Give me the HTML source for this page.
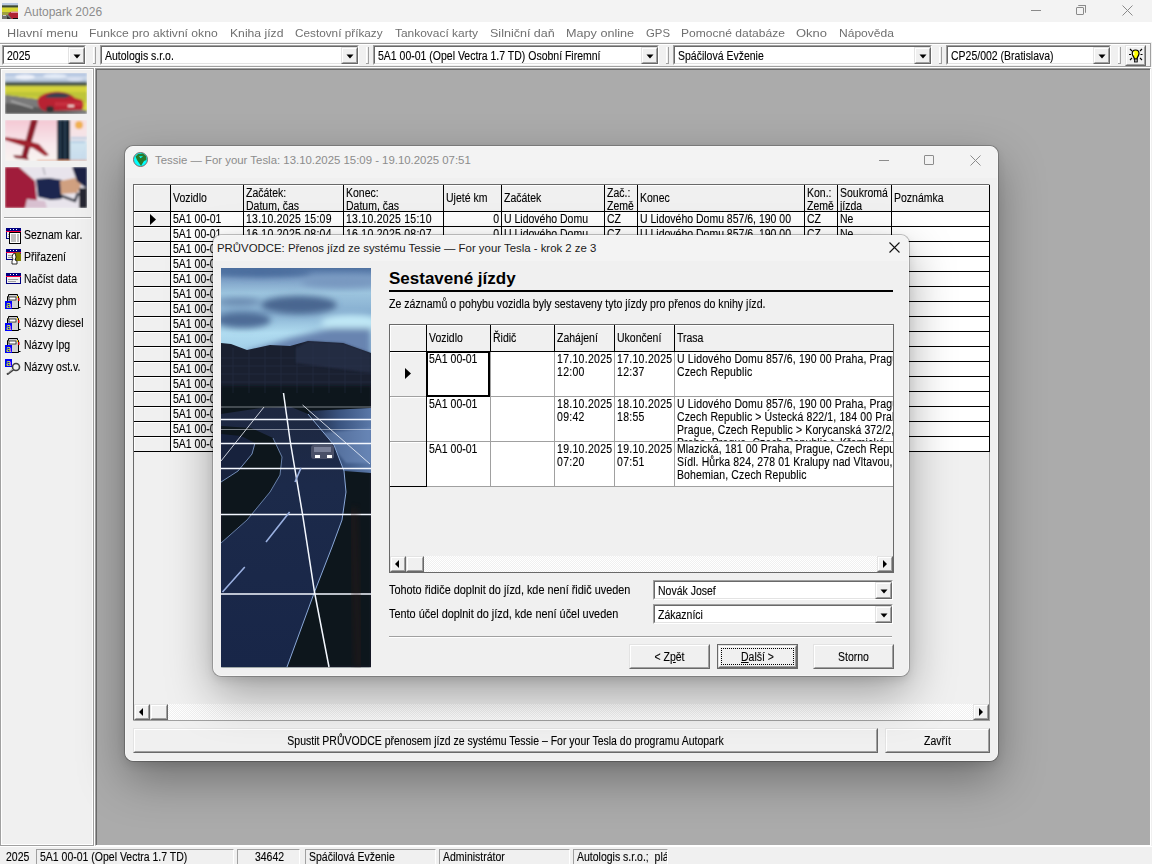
<!DOCTYPE html><html><head><meta charset="utf-8"><style>
*{margin:0;padding:0}
html,body{width:1152px;height:864px;overflow:hidden;background:#f0f0f0;font-family:"Liberation Sans", sans-serif;}
.t{position:absolute;white-space:pre;color:#000;font-size:12.3px;line-height:13px;transform:scaleX(.853);transform-origin:0 0;-webkit-text-stroke:0.12px #000;margin-top:1px;}
.s{position:absolute;white-space:pre;color:#000;}
.c{transform-origin:50% 0;}
.r{transform-origin:100% 0;}
</style></head><body><div style="position:absolute;left:0px;top:0px;width:1152px;height:22px;background:#f3f3f3;"></div><svg style="position:absolute;left:2px;top:3px" width="16" height="16" viewBox="0 0 16 16"><defs><filter id="ib"><feGaussianBlur stdDeviation="0.4"/></filter></defs><g filter="url(#ib)"><rect width="16" height="16" fill="#707070"/><rect width="16" height="2.5" fill="#b8c8e0"/><rect y="2.5" width="16" height="2" fill="#3a4a30"/><rect y="4.5" width="16" height="4.5" fill="#d8d830"/><path d="M0 9H8L6 12H0Z" fill="#a0a040"/><path d="M6 11L9 9H16V16H10Z" fill="#b02030"/><rect x="9" y="8.5" width="7" height="1.5" fill="#e090a0"/><path d="M5 13L9 16H5Z" fill="#303030"/><rect x="11" y="15" width="5" height="1" fill="#101010"/><rect x="1" y="12" width="3" height="1" fill="#c8c8c8"/></g></svg><div class="s" style="left:24px;top:4px;font-size:12px;line-height:16px;color:#8c8c8c;">Autopark 2026</div><div style="position:absolute;left:1031px;top:10px;width:10px;height:1px;background:#8a8a8a;"></div><div style="position:absolute;left:1076px;top:7px;width:8px;height:8px;box-sizing:border-box;border:1px solid #8a8a8a;border-radius:1px;"></div><div style="position:absolute;left:1078px;top:5px;width:8px;height:8px;box-sizing:border-box;border-top:1px solid #8a8a8a;border-right:1px solid #8a8a8a;border-radius:1px;"></div><svg style="position:absolute;left:1122px;top:5px" width="11" height="11"><path d="M0.5 0.5L10.5 10.5M10.5 0.5L0.5 10.5" stroke="#8a8a8a" stroke-width="1"/></svg><div style="position:absolute;left:0px;top:22px;width:1152px;height:20px;background:#fff;"></div><div class="s" style="left:7px;top:25px;font-size:11.6px;line-height:15px;color:#707070;transform:scaleX(1.09);transform-origin:0 0;">Hlavní menu</div><div class="s" style="left:89px;top:25px;font-size:11.6px;line-height:15px;color:#707070;transform:scaleX(1.045);transform-origin:0 0;">Funkce pro aktivní okno</div><div class="s" style="left:230px;top:25px;font-size:11.6px;line-height:15px;color:#707070;transform:scaleX(1.05);transform-origin:0 0;">Kniha jízd</div><div class="s" style="left:295px;top:25px;font-size:11.6px;line-height:15px;color:#707070;transform:scaleX(1.015);transform-origin:0 0;">Cestovní příkazy</div><div class="s" style="left:395px;top:25px;font-size:11.6px;line-height:15px;color:#707070;transform:scaleX(1.03);transform-origin:0 0;">Tankovací karty</div><div class="s" style="left:490px;top:25px;font-size:11.6px;line-height:15px;color:#707070;transform:scaleX(1.08);transform-origin:0 0;">Silniční daň</div><div class="s" style="left:566px;top:25px;font-size:11.6px;line-height:15px;color:#707070;transform:scaleX(1.09);transform-origin:0 0;">Mapy online</div><div class="s" style="left:646px;top:25px;font-size:11.6px;line-height:15px;color:#707070;transform:scaleX(0.98);transform-origin:0 0;">GPS</div><div class="s" style="left:681px;top:25px;font-size:11.6px;line-height:15px;color:#707070;transform:scaleX(1.04);transform-origin:0 0;">Pomocné databáze</div><div class="s" style="left:796px;top:25px;font-size:11.6px;line-height:15px;color:#707070;transform:scaleX(1.12);transform-origin:0 0;">Okno</div><div class="s" style="left:839px;top:25px;font-size:11.6px;line-height:15px;color:#707070;transform:scaleX(1.04);transform-origin:0 0;">Nápověda</div><div style="position:absolute;left:0px;top:42px;width:1152px;height:26px;background:#f0f0f0;"></div><div style="position:absolute;left:0px;top:43px;width:1151px;height:1px;background:#a0a0a0;"></div><div style="position:absolute;left:0px;top:44px;width:1151px;height:1px;background:#fff;"></div><div style="position:absolute;left:0px;top:66px;width:1151px;height:1px;background:#a0a0a0;"></div><div style="position:absolute;left:0px;top:67px;width:1152px;height:1px;background:#fff;"></div><div style="position:absolute;left:1150px;top:43px;width:1px;height:24px;background:#a0a0a0;"></div><div style="position:absolute;left:2px;top:45px;width:84px;height:20px;box-sizing:border-box;background:#fff;border-top:1px solid #a0a0a0;border-left:1px solid #a0a0a0;border-right:1px solid #fff;border-bottom:1px solid #fff;"><div style="position:absolute;left:0px;top:0px;width:82px;height:18px;box-sizing:border-box;border-top:1px solid #696969;border-left:1px solid #696969;border-right:1px solid #e3e3e3;border-bottom:1px solid #e3e3e3;"></div></div><div style="position:absolute;left:68px;top:47px;width:17px;height:17px;box-sizing:border-box;background:#f0f0f0;border-top:1px solid #e3e3e3;border-left:1px solid #e3e3e3;border-right:1px solid #696969;border-bottom:1px solid #696969;"><div style="position:absolute;left:0px;top:0px;width:15px;height:15px;box-sizing:border-box;border-top:1px solid #fff;border-left:1px solid #fff;border-right:1px solid #a0a0a0;border-bottom:1px solid #a0a0a0;"></div><svg style="position:absolute;left:4px;top:6px" width="8" height="5"><path d="M0.5 0.5H7.5L4 4.5Z" fill="#000"/></svg></div><div class="t" style="left:7px;top:48px;line-height:14px;">2025</div><div style="position:absolute;left:100px;top:45px;width:259px;height:20px;box-sizing:border-box;background:#fff;border-top:1px solid #a0a0a0;border-left:1px solid #a0a0a0;border-right:1px solid #fff;border-bottom:1px solid #fff;"><div style="position:absolute;left:0px;top:0px;width:257px;height:18px;box-sizing:border-box;border-top:1px solid #696969;border-left:1px solid #696969;border-right:1px solid #e3e3e3;border-bottom:1px solid #e3e3e3;"></div></div><div style="position:absolute;left:341px;top:47px;width:17px;height:17px;box-sizing:border-box;background:#f0f0f0;border-top:1px solid #e3e3e3;border-left:1px solid #e3e3e3;border-right:1px solid #696969;border-bottom:1px solid #696969;"><div style="position:absolute;left:0px;top:0px;width:15px;height:15px;box-sizing:border-box;border-top:1px solid #fff;border-left:1px solid #fff;border-right:1px solid #a0a0a0;border-bottom:1px solid #a0a0a0;"></div><svg style="position:absolute;left:4px;top:6px" width="8" height="5"><path d="M0.5 0.5H7.5L4 4.5Z" fill="#000"/></svg></div><div class="t" style="left:105px;top:48px;line-height:14px;">Autologis s.r.o.</div><div style="position:absolute;left:373px;top:45px;width:286px;height:20px;box-sizing:border-box;background:#fff;border-top:1px solid #a0a0a0;border-left:1px solid #a0a0a0;border-right:1px solid #fff;border-bottom:1px solid #fff;"><div style="position:absolute;left:0px;top:0px;width:284px;height:18px;box-sizing:border-box;border-top:1px solid #696969;border-left:1px solid #696969;border-right:1px solid #e3e3e3;border-bottom:1px solid #e3e3e3;"></div></div><div style="position:absolute;left:641px;top:47px;width:17px;height:17px;box-sizing:border-box;background:#f0f0f0;border-top:1px solid #e3e3e3;border-left:1px solid #e3e3e3;border-right:1px solid #696969;border-bottom:1px solid #696969;"><div style="position:absolute;left:0px;top:0px;width:15px;height:15px;box-sizing:border-box;border-top:1px solid #fff;border-left:1px solid #fff;border-right:1px solid #a0a0a0;border-bottom:1px solid #a0a0a0;"></div><svg style="position:absolute;left:4px;top:6px" width="8" height="5"><path d="M0.5 0.5H7.5L4 4.5Z" fill="#000"/></svg></div><div class="t" style="left:378px;top:48px;line-height:14px;">5A1 00-01 (Opel Vectra 1.7 TD) Osobní Firemní</div><div style="position:absolute;left:673px;top:45px;width:259px;height:20px;box-sizing:border-box;background:#fff;border-top:1px solid #a0a0a0;border-left:1px solid #a0a0a0;border-right:1px solid #fff;border-bottom:1px solid #fff;"><div style="position:absolute;left:0px;top:0px;width:257px;height:18px;box-sizing:border-box;border-top:1px solid #696969;border-left:1px solid #696969;border-right:1px solid #e3e3e3;border-bottom:1px solid #e3e3e3;"></div></div><div style="position:absolute;left:914px;top:47px;width:17px;height:17px;box-sizing:border-box;background:#f0f0f0;border-top:1px solid #e3e3e3;border-left:1px solid #e3e3e3;border-right:1px solid #696969;border-bottom:1px solid #696969;"><div style="position:absolute;left:0px;top:0px;width:15px;height:15px;box-sizing:border-box;border-top:1px solid #fff;border-left:1px solid #fff;border-right:1px solid #a0a0a0;border-bottom:1px solid #a0a0a0;"></div><svg style="position:absolute;left:4px;top:6px" width="8" height="5"><path d="M0.5 0.5H7.5L4 4.5Z" fill="#000"/></svg></div><div class="t" style="left:678px;top:48px;line-height:14px;">Spáčilová Evženie</div><div style="position:absolute;left:946px;top:45px;width:165px;height:20px;box-sizing:border-box;background:#fff;border-top:1px solid #a0a0a0;border-left:1px solid #a0a0a0;border-right:1px solid #fff;border-bottom:1px solid #fff;"><div style="position:absolute;left:0px;top:0px;width:163px;height:18px;box-sizing:border-box;border-top:1px solid #696969;border-left:1px solid #696969;border-right:1px solid #e3e3e3;border-bottom:1px solid #e3e3e3;"></div></div><div style="position:absolute;left:1093px;top:47px;width:17px;height:17px;box-sizing:border-box;background:#f0f0f0;border-top:1px solid #e3e3e3;border-left:1px solid #e3e3e3;border-right:1px solid #696969;border-bottom:1px solid #696969;"><div style="position:absolute;left:0px;top:0px;width:15px;height:15px;box-sizing:border-box;border-top:1px solid #fff;border-left:1px solid #fff;border-right:1px solid #a0a0a0;border-bottom:1px solid #a0a0a0;"></div><svg style="position:absolute;left:4px;top:6px" width="8" height="5"><path d="M0.5 0.5H7.5L4 4.5Z" fill="#000"/></svg></div><div class="t" style="left:951px;top:48px;line-height:14px;">CP25/002 (Bratislava)</div><div style="position:absolute;left:93px;top:47px;width:1px;height:16px;background:#fff;"></div><div style="position:absolute;left:95px;top:47px;width:1px;height:16px;background:#a0a0a0;"></div><div style="position:absolute;left:93px;top:63px;width:3px;height:1px;background:#a0a0a0;"></div><div style="position:absolute;left:366px;top:47px;width:1px;height:16px;background:#fff;"></div><div style="position:absolute;left:368px;top:47px;width:1px;height:16px;background:#a0a0a0;"></div><div style="position:absolute;left:366px;top:63px;width:3px;height:1px;background:#a0a0a0;"></div><div style="position:absolute;left:666px;top:47px;width:1px;height:16px;background:#fff;"></div><div style="position:absolute;left:668px;top:47px;width:1px;height:16px;background:#a0a0a0;"></div><div style="position:absolute;left:666px;top:63px;width:3px;height:1px;background:#a0a0a0;"></div><div style="position:absolute;left:939px;top:47px;width:1px;height:16px;background:#fff;"></div><div style="position:absolute;left:941px;top:47px;width:1px;height:16px;background:#a0a0a0;"></div><div style="position:absolute;left:939px;top:63px;width:3px;height:1px;background:#a0a0a0;"></div><div style="position:absolute;left:1118px;top:47px;width:1px;height:16px;background:#fff;"></div><div style="position:absolute;left:1120px;top:47px;width:1px;height:16px;background:#a0a0a0;"></div><div style="position:absolute;left:1118px;top:63px;width:3px;height:1px;background:#a0a0a0;"></div><div style="position:absolute;left:1125px;top:45px;width:21px;height:21px;box-sizing:border-box;background:#f0f0f0;border-top:1px solid #e3e3e3;border-left:1px solid #e3e3e3;border-right:1px solid #696969;border-bottom:1px solid #696969;"><div style="position:absolute;left:0px;top:0px;width:19px;height:19px;box-sizing:border-box;border-top:1px solid #fff;border-left:1px solid #fff;border-right:1px solid #a0a0a0;border-bottom:1px solid #a0a0a0;"></div><svg style="position:absolute;left:1px;top:1px" width="18" height="18" viewBox="0 0 18 18"><path d="M3 2L5 4M15 2L13 4M2 7.5H4M13.5 7.5H15.5M3 13L5 11M15 13L13 11" stroke="#000" stroke-width="1.1"/><path d="M8.5 3C6.2 3 5.2 4.8 5.2 6.6C5.2 8.4 6.6 9.4 7.2 11V12H10.2V11C10.8 9.4 12 8.4 12 6.6C12 4.8 11 3 8.5 3Z" fill="#ffff00" stroke="#000" stroke-width="1.2"/><path d="M7 5C6.5 6 6.5 7 7 8" stroke="#fff" stroke-width="1.2"/><rect x="7.5" y="12" width="2.8" height="3" fill="#a0a0a0" stroke="#000" stroke-width="0.8"/></svg></div><div style="position:absolute;left:0px;top:68px;width:94px;height:778px;box-sizing:border-box;background:#f0f0f0;border-left:1px solid #a0a0a0;border-top:1px solid #a0a0a0;border-right:1px solid #a0a0a0;border-bottom:1px solid #a0a0a0;"><div style="position:absolute;left:0px;top:0px;width:92px;height:776px;box-sizing:border-box;border-left:1px solid #fff;border-top:1px solid #fff;border-right:1px solid #fff;border-bottom:1px solid #fff;"></div></div><div style="position:absolute;left:94px;top:68px;width:1px;height:778px;background:#fff;"></div><svg style="position:absolute;left:5px;top:73px" width="82" height="41" viewBox="0 0 82 41">
<defs><filter id="pb" x="-10%" y="-10%" width="120%" height="120%"><feGaussianBlur stdDeviation="0.9"/></filter>
<linearGradient id="p1s" x1="0" y1="0" x2="0" y2="1"><stop offset="0" stop-color="#a8bcdc"/><stop offset="0.5" stop-color="#d0dcec"/><stop offset="1" stop-color="#98acc8"/></linearGradient></defs>
<g filter="url(#pb)">
<rect width="82" height="41" fill="#6a6a6a"/>
<rect width="82" height="10" fill="url(#p1s)"/>
<ellipse cx="20" cy="4" rx="10" ry="2.5" fill="#eef2fa"/><ellipse cx="50" cy="3" rx="12" ry="2" fill="#e4ecf8"/><ellipse cx="70" cy="6" rx="8" ry="2" fill="#d8e0f0"/>
<rect y="9" width="82" height="4" fill="#4e5a4c"/>
<path d="M0 13H82V38L60 32L30 26L0 22Z" fill="#d4d43a"/>
<path d="M0 19H82V30L60 28L30 24L0 22Z" fill="#b8c038" opacity="0.8"/>
<path d="M0 22L30 26L82 38V41H0Z" fill="#7a7a7a"/>
<path d="M0 30L82 41H0Z" fill="#5a5a5a"/>
<path d="M6 28L28 35" stroke="#c8c8c8" stroke-width="1"/>
<path d="M33 26C34 23 40 20 48 19C58 18 66 21 70 25L77 27C79 30 79 34 77 37L40 38C34 36 32 31 33 26Z" fill="#b82030"/>
<path d="M40 24C44 19 58 18 66 23L60 25H42Z" fill="#3a4050"/>
<path d="M50 29H77V33H50Z" fill="#d03848" opacity="0.6"/>
<ellipse cx="45" cy="36" rx="4" ry="3" fill="#303030"/>
<rect x="63" y="32" width="6" height="2" fill="#f0d0d0"/>
</g></svg><svg style="position:absolute;left:5px;top:120px" width="82" height="41" viewBox="0 0 82 41">
<defs><linearGradient id="p2a" x1="0" y1="0" x2="0" y2="1"><stop offset="0" stop-color="#f4c8d4"/><stop offset="0.6" stop-color="#f8e8ec"/><stop offset="1" stop-color="#f8f4f0"/></linearGradient>
<linearGradient id="p2b" x1="0" y1="0" x2="0" y2="1"><stop offset="0" stop-color="#f8e0e0"/><stop offset="0.45" stop-color="#f4e4e8"/><stop offset="0.55" stop-color="#d0e4f0"/><stop offset="1" stop-color="#c8dcec"/></linearGradient><filter id="pb2" x="-10%" y="-10%" width="120%" height="120%"><feGaussianBlur stdDeviation="0.9"/></filter></defs>
<g filter="url(#pb2)">
<rect width="52" height="41" fill="url(#p2a)"/>
<rect x="52" width="30" height="41" fill="url(#p2b)"/>
<path d="M26 0H33L22 38H16Z" fill="#8a1a2c"/>
<path d="M0 17L20 20L34 24L44 35L40 36L28 28L18 26L0 20Z" fill="#a0202e"/>
<path d="M8 35L22 36L24 40L10 38Z" fill="#8a1a2c"/>
<rect x="52" width="13" height="41" fill="#142030"/>
<path d="M55 0V41M60 0V41" stroke="#3a6070" stroke-width="1.5" opacity="0.7"/>
<circle cx="74" cy="5" r="4" fill="#f0b050"/>
<path d="M66 18H82M66 22H80" stroke="#a8c8e0" stroke-width="2" opacity="0.7"/>
<rect x="32" y="40" width="50" height="1" fill="#e09060"/>
</g></svg><svg style="position:absolute;left:5px;top:167px" width="82" height="41" viewBox="0 0 82 41">
<defs><filter id="pb3" x="-10%" y="-10%" width="120%" height="120%"><feGaussianBlur stdDeviation="0.9"/></filter></defs><g filter="url(#pb3)">
<rect width="82" height="41" fill="#e8e4ec"/>
<path d="M0 0H14L30 14L32 34L22 41H0Z" fill="#a01a3a"/>
<path d="M22 32L40 34L42 41H20Z" fill="#d8c0d0"/>
<path d="M31 12L44 11L57 13L57 32L46 33L33 30Z" fill="#1e2850"/>
<path d="M55 14L70 11L76 18L72 26L56 27Z" fill="#d0a080"/>
<path d="M67 0H82V22L72 14Z" fill="#1a2044"/>
<path d="M54 28L70 34L73 26" stroke="#202838" stroke-width="2.5" fill="none"/>
<rect x="74" y="21" width="8" height="20" fill="#282830"/>
<path d="M38 0L40 8" stroke="#9898a0" stroke-width="1"/>
</g></svg><div style="position:absolute;left:4px;top:217px;width:87px;height:1px;background:#a0a0a0;"></div><div style="position:absolute;left:4px;top:218px;width:87px;height:1px;background:#fff;"></div><svg style="position:absolute;left:6px;top:228px" width="16" height="16"><rect x="0.5" y="0.5" width="14" height="10" fill="#f0f0f0" stroke="#000080"/><rect x="0" y="0" width="15" height="3" fill="#000080"/><path d="M4 1.5h1M7 1.5h1M10 1.5h1" stroke="#fff"/><rect x="0" y="3" width="15" height="1" fill="#ff0040"/><path d="M2 6.5h10M2 8.5h8" stroke="#a0a0a0"/><rect x="0" y="10" width="15" height="1" fill="#000080"/><rect x="3.5" y="4.5" width="11" height="11" fill="#fff" stroke="#000"/><path d="M5 7h5M11 7h2M5 9h5M11 9h2M5 11h5M11 11h2M5 13h5M11 13h2" stroke="#808080"/></svg><div class="t" style="left:24px;top:228px;">Seznam kar.</div><svg style="position:absolute;left:6px;top:249px" width="16" height="16"><rect x="0.5" y="0.5" width="14" height="10" fill="#f0f0f0" stroke="#000080"/><rect x="0" y="0" width="15" height="3" fill="#000080"/><path d="M4 1.5h1M7 1.5h1M10 1.5h1" stroke="#fff"/><rect x="0" y="3" width="15" height="1" fill="#ff0040"/><path d="M2 6.5h10M2 8.5h8" stroke="#a0a0a0"/><rect x="0" y="10" width="15" height="1" fill="#000080"/><path d="M8 4L13 3L15 5V12H10Z" fill="#808000"/><path d="M7 5L9 4L10 8L9 11L11 12V15H6V12L7 10L6 8Z" fill="#fff" stroke="#000" stroke-width="0.8"/></svg><div class="t" style="left:24px;top:250px;">Přiřazení</div><svg style="position:absolute;left:6px;top:273px" width="16" height="16"><rect x="0.5" y="0.5" width="14" height="10" fill="#f0f0f0" stroke="#000080"/><rect x="0" y="0" width="15" height="3" fill="#000080"/><path d="M4 1.5h1M7 1.5h1M10 1.5h1" stroke="#fff"/><rect x="0" y="3" width="15" height="1" fill="#ff0040"/><path d="M2 6.5h10M2 8.5h8" stroke="#a0a0a0"/><rect x="0" y="10" width="15" height="1" fill="#000080"/></svg><div class="t" style="left:24px;top:272px;">Načíst data</div><svg style="position:absolute;left:5px;top:293px" width="16" height="16"><path d="M3.5 1.5H12.5V3.5H13.5V15.5H2.5V3.5H3.5Z" fill="#d0d0d0" stroke="#000"/><rect x="4" y="4" width="7" height="3" fill="#fff" stroke="#000" stroke-width="0.7"/><rect x="13" y="5" width="1.5" height="3" fill="#e00000"/><rect x="12" y="3" width="1" height="2" fill="#ffd000"/><path d="M13.5 9V14.5H15.5" stroke="#000" fill="none"/><rect x="0" y="8" width="7" height="8" fill="#0000ff"/><text x="1" y="15" font-size="9" font-family="Liberation Sans" fill="#ffff00">a</text></svg><div class="t" style="left:24px;top:294px;">Názvy phm</div><svg style="position:absolute;left:5px;top:315px" width="16" height="16"><path d="M3.5 1.5H12.5V3.5H13.5V15.5H2.5V3.5H3.5Z" fill="#d0d0d0" stroke="#000"/><rect x="4" y="4" width="7" height="3" fill="#fff" stroke="#000" stroke-width="0.7"/><rect x="13" y="5" width="1.5" height="3" fill="#e00000"/><rect x="12" y="3" width="1" height="2" fill="#ffd000"/><path d="M13.5 9V14.5H15.5" stroke="#000" fill="none"/><rect x="0" y="8" width="7" height="8" fill="#0000ff"/><text x="1" y="15" font-size="9" font-family="Liberation Sans" fill="#ffff00">a</text></svg><div class="t" style="left:24px;top:316px;">Názvy diesel</div><svg style="position:absolute;left:5px;top:337px" width="16" height="16"><path d="M3.5 1.5H12.5V3.5H13.5V15.5H2.5V3.5H3.5Z" fill="#d0d0d0" stroke="#000"/><rect x="4" y="4" width="7" height="3" fill="#fff" stroke="#000" stroke-width="0.7"/><rect x="13" y="5" width="1.5" height="3" fill="#e00000"/><rect x="12" y="3" width="1" height="2" fill="#ffd000"/><path d="M13.5 9V14.5H15.5" stroke="#000" fill="none"/><rect x="0" y="8" width="7" height="8" fill="#0000ff"/><text x="1" y="15" font-size="9" font-family="Liberation Sans" fill="#ffff00">a</text></svg><div class="t" style="left:24px;top:338px;">Názvy lpg</div><svg style="position:absolute;left:5px;top:359px" width="16" height="16"><rect x="0" y="0" width="7" height="8" fill="#0000ff"/><text x="1" y="7" font-size="9" font-family="Liberation Sans" fill="#ffff00">a</text><circle cx="11" cy="8" r="3.5" fill="none" stroke="#404040" stroke-width="1.6"/><path d="M8.5 10.5L2 15.5" stroke="#404040" stroke-width="2"/><path d="M8 10L3 14" stroke="#c0c0c0" stroke-width="0.8"/></svg><div class="t" style="left:24px;top:360px;">Názvy ost.v.</div><div style="position:absolute;left:95px;top:68px;width:1056px;height:778px;box-sizing:border-box;background:#ababab;border-left:1px solid #a0a0a0;border-top:1px solid #a0a0a0;border-right:1px solid #fff;border-bottom:1px solid #fff;"><div style="position:absolute;left:0px;top:0px;width:1054px;height:776px;box-sizing:border-box;border-left:1px solid #696969;border-top:1px solid #696969;"></div></div><div style="position:absolute;left:0px;top:846px;width:1152px;height:18px;background:#f0f0f0;"></div><div style="position:absolute;left:0px;top:846px;width:1152px;height:1px;background:#fff;"></div><div class="t" style="left:6px;top:850px;">2025</div><div style="position:absolute;left:36px;top:849px;width:198px;height:15px;box-sizing:border-box;border-left:1px solid #a0a0a0;border-top:1px solid #a0a0a0;border-right:1px solid #fff;overflow:hidden;"><div class="t " style="left:3px;top:0px;width:192px;text-align:left;">5A1 00-01 (Opel Vectra 1.7 TD)</div></div><div style="position:absolute;left:237px;top:849px;width:63px;height:15px;box-sizing:border-box;border-left:1px solid #a0a0a0;border-top:1px solid #a0a0a0;border-right:1px solid #fff;overflow:hidden;"><div class="t c" style="left:3px;top:0px;width:57px;text-align:center;">34642</div></div><div style="position:absolute;left:305px;top:849px;width:131px;height:15px;box-sizing:border-box;border-left:1px solid #a0a0a0;border-top:1px solid #a0a0a0;border-right:1px solid #fff;overflow:hidden;"><div class="t " style="left:3px;top:0px;width:125px;text-align:left;">Spáčilová Evženie</div></div><div style="position:absolute;left:439px;top:849px;width:131px;height:15px;box-sizing:border-box;border-left:1px solid #a0a0a0;border-top:1px solid #a0a0a0;border-right:1px solid #fff;overflow:hidden;"><div class="t " style="left:3px;top:0px;width:125px;text-align:left;">Administrátor</div></div><div style="position:absolute;left:573px;top:849px;width:95px;height:15px;box-sizing:border-box;border-left:1px solid #a0a0a0;border-top:1px solid #a0a0a0;border-right:1px solid #fff;overflow:hidden;"><div class="t " style="left:3px;top:0px;width:89px;text-align:left;">Autologis s.r.o.;  plá</div></div><div style="position:absolute;left:125px;top:146px;width:873px;height:615px;box-sizing:border-box;background:#f0f0f0;border:1px solid #f6f6f6;border-radius:8px;box-shadow:0 0 0 1px rgba(0,0,0,0.22),0 18px 46px rgba(0,0,0,0.34),0 4px 10px rgba(0,0,0,0.10);overflow:hidden;"><div style="position:absolute;left:0px;top:0px;width:871px;height:31px;background:#f3f3f3;"></div></div><svg style="position:absolute;left:133px;top:152px" width="15" height="15" viewBox="0 0 15 15"><circle cx="7.5" cy="7.5" r="7" fill="#00ffff" stroke="#806868" stroke-width="1"/><path d="M2.5 4.5L5 2L10 1.5L13 4L13.5 8L11 9L9.5 11.5L8 14L6 11L4 8Z" fill="#2a7a2a"/><path d="M6 4.2L7.6 6.2L10 4.2Z" fill="#00ffff"/></svg><div class="s" style="left:155px;top:153px;font-size:11.4px;line-height:15px;color:#8c8c8c;">Tessie — For your Tesla: 13.10.2025 15:09 - 19.10.2025 07:51</div><div style="position:absolute;left:879px;top:160px;width:10px;height:1px;background:#8c8c8c;"></div><div style="position:absolute;left:924px;top:155px;width:10px;height:10px;box-sizing:border-box;border:1px solid #8c8c8c;border-radius:1px;"></div><svg style="position:absolute;left:970px;top:155px" width="11" height="11"><path d="M0.5 0.5L10.5 10.5M10.5 0.5L0.5 10.5" stroke="#8c8c8c" stroke-width="1"/></svg><div style="position:absolute;left:133px;top:184px;width:857px;height:537px;box-sizing:border-box;background:#f0f0f0;border-left:1px solid #696969;border-top:1px solid #696969;border-right:1px solid #fff;border-bottom:1px solid #fff;"><div style="position:absolute;left:0px;top:0px;width:856px;height:536px;box-sizing:border-box;border-right:1px solid #a0a0a0;border-bottom:1px solid #a0a0a0;"></div></div><div style="position:absolute;left:134px;top:185px;width:36px;height:26px;box-sizing:border-box;background:#f0f0f0;border-left:1px solid #fff;border-top:1px solid #fff;"></div><div style="position:absolute;left:170px;top:185px;width:73px;height:26px;box-sizing:border-box;background:#f0f0f0;border-left:1px solid #fff;border-top:1px solid #fff;"></div><div class="t" style="left:173px;top:191px;">Vozidlo</div><div style="position:absolute;left:243px;top:185px;width:100px;height:26px;box-sizing:border-box;background:#f0f0f0;border-left:1px solid #fff;border-top:1px solid #fff;"></div><div class="t" style="left:246px;top:186px;line-height:13px;">Začátek:
Datum, čas</div><div style="position:absolute;left:343px;top:185px;width:100px;height:26px;box-sizing:border-box;background:#f0f0f0;border-left:1px solid #fff;border-top:1px solid #fff;"></div><div class="t" style="left:346px;top:186px;line-height:13px;">Konec:
Datum, čas</div><div style="position:absolute;left:443px;top:185px;width:58px;height:26px;box-sizing:border-box;background:#f0f0f0;border-left:1px solid #fff;border-top:1px solid #fff;"></div><div class="t" style="left:446px;top:191px;">Ujeté km</div><div style="position:absolute;left:501px;top:185px;width:103px;height:26px;box-sizing:border-box;background:#f0f0f0;border-left:1px solid #fff;border-top:1px solid #fff;"></div><div class="t" style="left:504px;top:191px;">Začátek</div><div style="position:absolute;left:604px;top:185px;width:33px;height:26px;box-sizing:border-box;background:#f0f0f0;border-left:1px solid #fff;border-top:1px solid #fff;"></div><div class="t" style="left:607px;top:186px;line-height:13px;">Zač.:
Země</div><div style="position:absolute;left:637px;top:185px;width:167px;height:26px;box-sizing:border-box;background:#f0f0f0;border-left:1px solid #fff;border-top:1px solid #fff;"></div><div class="t" style="left:640px;top:191px;">Konec</div><div style="position:absolute;left:804px;top:185px;width:33px;height:26px;box-sizing:border-box;background:#f0f0f0;border-left:1px solid #fff;border-top:1px solid #fff;"></div><div class="t" style="left:807px;top:186px;line-height:13px;">Kon.:
Země</div><div style="position:absolute;left:837px;top:185px;width:54px;height:26px;box-sizing:border-box;background:#f0f0f0;border-left:1px solid #fff;border-top:1px solid #fff;"></div><div class="t" style="left:840px;top:186px;line-height:13px;">Soukromá
jízda</div><div style="position:absolute;left:891px;top:185px;width:98px;height:26px;box-sizing:border-box;background:#f0f0f0;border-left:1px solid #fff;border-top:1px solid #fff;"></div><div class="t" style="left:894px;top:191px;">Poznámka</div><div style="position:absolute;left:170px;top:185px;width:1px;height:266px;background:#000;"></div><div style="position:absolute;left:243px;top:185px;width:1px;height:266px;background:#000;"></div><div style="position:absolute;left:343px;top:185px;width:1px;height:266px;background:#000;"></div><div style="position:absolute;left:443px;top:185px;width:1px;height:266px;background:#000;"></div><div style="position:absolute;left:501px;top:185px;width:1px;height:266px;background:#000;"></div><div style="position:absolute;left:604px;top:185px;width:1px;height:266px;background:#000;"></div><div style="position:absolute;left:637px;top:185px;width:1px;height:266px;background:#000;"></div><div style="position:absolute;left:804px;top:185px;width:1px;height:266px;background:#000;"></div><div style="position:absolute;left:837px;top:185px;width:1px;height:266px;background:#000;"></div><div style="position:absolute;left:891px;top:185px;width:1px;height:266px;background:#000;"></div><div style="position:absolute;left:989px;top:185px;width:1px;height:266px;background:#000;"></div><div style="position:absolute;left:134px;top:212px;width:36px;height:14px;box-sizing:border-box;background:#f0f0f0;border-left:1px solid #fff;border-top:1px solid #fff;"></div><div style="position:absolute;left:171px;top:212px;width:818px;height:14px;background:#fff;"></div><div style="position:absolute;left:134px;top:211px;width:856px;height:1px;background:#000;"></div><div style="position:absolute;left:134px;top:227px;width:36px;height:14px;box-sizing:border-box;background:#f0f0f0;border-left:1px solid #fff;border-top:1px solid #fff;"></div><div style="position:absolute;left:171px;top:227px;width:818px;height:14px;background:#fff;"></div><div style="position:absolute;left:134px;top:226px;width:856px;height:1px;background:#000;"></div><div style="position:absolute;left:134px;top:242px;width:36px;height:14px;box-sizing:border-box;background:#f0f0f0;border-left:1px solid #fff;border-top:1px solid #fff;"></div><div style="position:absolute;left:171px;top:242px;width:818px;height:14px;background:#fff;"></div><div style="position:absolute;left:134px;top:241px;width:856px;height:1px;background:#000;"></div><div style="position:absolute;left:134px;top:257px;width:36px;height:14px;box-sizing:border-box;background:#f0f0f0;border-left:1px solid #fff;border-top:1px solid #fff;"></div><div style="position:absolute;left:171px;top:257px;width:818px;height:14px;background:#fff;"></div><div style="position:absolute;left:134px;top:256px;width:856px;height:1px;background:#000;"></div><div style="position:absolute;left:134px;top:272px;width:36px;height:14px;box-sizing:border-box;background:#f0f0f0;border-left:1px solid #fff;border-top:1px solid #fff;"></div><div style="position:absolute;left:171px;top:272px;width:818px;height:14px;background:#fff;"></div><div style="position:absolute;left:134px;top:271px;width:856px;height:1px;background:#000;"></div><div style="position:absolute;left:134px;top:287px;width:36px;height:14px;box-sizing:border-box;background:#f0f0f0;border-left:1px solid #fff;border-top:1px solid #fff;"></div><div style="position:absolute;left:171px;top:287px;width:818px;height:14px;background:#fff;"></div><div style="position:absolute;left:134px;top:286px;width:856px;height:1px;background:#000;"></div><div style="position:absolute;left:134px;top:302px;width:36px;height:14px;box-sizing:border-box;background:#f0f0f0;border-left:1px solid #fff;border-top:1px solid #fff;"></div><div style="position:absolute;left:171px;top:302px;width:818px;height:14px;background:#fff;"></div><div style="position:absolute;left:134px;top:301px;width:856px;height:1px;background:#000;"></div><div style="position:absolute;left:134px;top:317px;width:36px;height:14px;box-sizing:border-box;background:#f0f0f0;border-left:1px solid #fff;border-top:1px solid #fff;"></div><div style="position:absolute;left:171px;top:317px;width:818px;height:14px;background:#fff;"></div><div style="position:absolute;left:134px;top:316px;width:856px;height:1px;background:#000;"></div><div style="position:absolute;left:134px;top:332px;width:36px;height:14px;box-sizing:border-box;background:#f0f0f0;border-left:1px solid #fff;border-top:1px solid #fff;"></div><div style="position:absolute;left:171px;top:332px;width:818px;height:14px;background:#fff;"></div><div style="position:absolute;left:134px;top:331px;width:856px;height:1px;background:#000;"></div><div style="position:absolute;left:134px;top:347px;width:36px;height:14px;box-sizing:border-box;background:#f0f0f0;border-left:1px solid #fff;border-top:1px solid #fff;"></div><div style="position:absolute;left:171px;top:347px;width:818px;height:14px;background:#fff;"></div><div style="position:absolute;left:134px;top:346px;width:856px;height:1px;background:#000;"></div><div style="position:absolute;left:134px;top:362px;width:36px;height:14px;box-sizing:border-box;background:#f0f0f0;border-left:1px solid #fff;border-top:1px solid #fff;"></div><div style="position:absolute;left:171px;top:362px;width:818px;height:14px;background:#fff;"></div><div style="position:absolute;left:134px;top:361px;width:856px;height:1px;background:#000;"></div><div style="position:absolute;left:134px;top:377px;width:36px;height:14px;box-sizing:border-box;background:#f0f0f0;border-left:1px solid #fff;border-top:1px solid #fff;"></div><div style="position:absolute;left:171px;top:377px;width:818px;height:14px;background:#fff;"></div><div style="position:absolute;left:134px;top:376px;width:856px;height:1px;background:#000;"></div><div style="position:absolute;left:134px;top:392px;width:36px;height:14px;box-sizing:border-box;background:#f0f0f0;border-left:1px solid #fff;border-top:1px solid #fff;"></div><div style="position:absolute;left:171px;top:392px;width:818px;height:14px;background:#fff;"></div><div style="position:absolute;left:134px;top:391px;width:856px;height:1px;background:#000;"></div><div style="position:absolute;left:134px;top:407px;width:36px;height:14px;box-sizing:border-box;background:#f0f0f0;border-left:1px solid #fff;border-top:1px solid #fff;"></div><div style="position:absolute;left:171px;top:407px;width:818px;height:14px;background:#fff;"></div><div style="position:absolute;left:134px;top:406px;width:856px;height:1px;background:#000;"></div><div style="position:absolute;left:134px;top:422px;width:36px;height:14px;box-sizing:border-box;background:#f0f0f0;border-left:1px solid #fff;border-top:1px solid #fff;"></div><div style="position:absolute;left:171px;top:422px;width:818px;height:14px;background:#fff;"></div><div style="position:absolute;left:134px;top:421px;width:856px;height:1px;background:#000;"></div><div style="position:absolute;left:134px;top:437px;width:36px;height:14px;box-sizing:border-box;background:#f0f0f0;border-left:1px solid #fff;border-top:1px solid #fff;"></div><div style="position:absolute;left:171px;top:437px;width:818px;height:14px;background:#fff;"></div><div style="position:absolute;left:134px;top:436px;width:856px;height:1px;background:#000;"></div><div style="position:absolute;left:134px;top:451px;width:856px;height:1px;background:#000;"></div><div style="position:absolute;left:243px;top:211px;width:1px;height:240px;background:#000;"></div><div style="position:absolute;left:343px;top:211px;width:1px;height:240px;background:#000;"></div><div style="position:absolute;left:443px;top:211px;width:1px;height:240px;background:#000;"></div><div style="position:absolute;left:501px;top:211px;width:1px;height:240px;background:#000;"></div><div style="position:absolute;left:604px;top:211px;width:1px;height:240px;background:#000;"></div><div style="position:absolute;left:637px;top:211px;width:1px;height:240px;background:#000;"></div><div style="position:absolute;left:804px;top:211px;width:1px;height:240px;background:#000;"></div><div style="position:absolute;left:837px;top:211px;width:1px;height:240px;background:#000;"></div><div style="position:absolute;left:891px;top:211px;width:1px;height:240px;background:#000;"></div><svg style="position:absolute;left:150px;top:214px" width="7" height="11"><path d="M0 0L6 5.5L0 11Z" fill="#000"/></svg><div style="position:absolute;left:171px;top:212px;width:72px;height:14px;overflow:hidden;"><div class="t" style="left:2px;top:0;">5A1 00-01</div></div><div style="position:absolute;left:244px;top:212px;width:99px;height:14px;overflow:hidden;"><div class="t" style="left:2px;top:0;letter-spacing:0.3px;">13.10.2025 15:09</div></div><div style="position:absolute;left:344px;top:212px;width:99px;height:14px;overflow:hidden;"><div class="t" style="left:2px;top:0;letter-spacing:0.3px;">13.10.2025 15:10</div></div><div class="t r" style="left:443px;top:212px;width:56px;text-align:right;">0</div><div style="position:absolute;left:502px;top:212px;width:102px;height:14px;overflow:hidden;"><div class="t" style="left:2px;top:0;">U Lidového Domu</div></div><div style="position:absolute;left:605px;top:212px;width:32px;height:14px;overflow:hidden;"><div class="t" style="left:2px;top:0;">CZ</div></div><div style="position:absolute;left:638px;top:212px;width:166px;height:14px;overflow:hidden;"><div class="t" style="left:2px;top:0;">U Lidového Domu 857/6, 190 00</div></div><div style="position:absolute;left:805px;top:212px;width:32px;height:14px;overflow:hidden;"><div class="t" style="left:2px;top:0;">CZ</div></div><div style="position:absolute;left:838px;top:212px;width:53px;height:14px;overflow:hidden;"><div class="t" style="left:2px;top:0;">Ne</div></div><div style="position:absolute;left:171px;top:227px;width:72px;height:14px;overflow:hidden;"><div class="t" style="left:2px;top:0;">5A1 00-01</div></div><div style="position:absolute;left:244px;top:227px;width:99px;height:14px;overflow:hidden;"><div class="t" style="left:2px;top:0;letter-spacing:0.3px;">16.10.2025 08:04</div></div><div style="position:absolute;left:344px;top:227px;width:99px;height:14px;overflow:hidden;"><div class="t" style="left:2px;top:0;letter-spacing:0.3px;">16.10.2025 08:07</div></div><div class="t r" style="left:443px;top:227px;width:56px;text-align:right;">0</div><div style="position:absolute;left:502px;top:227px;width:102px;height:14px;overflow:hidden;"><div class="t" style="left:2px;top:0;">U Lidového Domu</div></div><div style="position:absolute;left:605px;top:227px;width:32px;height:14px;overflow:hidden;"><div class="t" style="left:2px;top:0;">CZ</div></div><div style="position:absolute;left:638px;top:227px;width:166px;height:14px;overflow:hidden;"><div class="t" style="left:2px;top:0;">U Lidového Domu 857/6, 190 00</div></div><div style="position:absolute;left:805px;top:227px;width:32px;height:14px;overflow:hidden;"><div class="t" style="left:2px;top:0;">CZ</div></div><div style="position:absolute;left:838px;top:227px;width:53px;height:14px;overflow:hidden;"><div class="t" style="left:2px;top:0;">Ne</div></div><div style="position:absolute;left:171px;top:242px;width:72px;height:14px;overflow:hidden;"><div class="t" style="left:2px;top:0;">5A1 00-01</div></div><div style="position:absolute;left:171px;top:257px;width:72px;height:14px;overflow:hidden;"><div class="t" style="left:2px;top:0;">5A1 00-01</div></div><div style="position:absolute;left:171px;top:272px;width:72px;height:14px;overflow:hidden;"><div class="t" style="left:2px;top:0;">5A1 00-01</div></div><div style="position:absolute;left:171px;top:287px;width:72px;height:14px;overflow:hidden;"><div class="t" style="left:2px;top:0;">5A1 00-01</div></div><div style="position:absolute;left:171px;top:302px;width:72px;height:14px;overflow:hidden;"><div class="t" style="left:2px;top:0;">5A1 00-01</div></div><div style="position:absolute;left:171px;top:317px;width:72px;height:14px;overflow:hidden;"><div class="t" style="left:2px;top:0;">5A1 00-01</div></div><div style="position:absolute;left:171px;top:332px;width:72px;height:14px;overflow:hidden;"><div class="t" style="left:2px;top:0;">5A1 00-01</div></div><div style="position:absolute;left:171px;top:347px;width:72px;height:14px;overflow:hidden;"><div class="t" style="left:2px;top:0;">5A1 00-01</div></div><div style="position:absolute;left:171px;top:362px;width:72px;height:14px;overflow:hidden;"><div class="t" style="left:2px;top:0;">5A1 00-01</div></div><div style="position:absolute;left:171px;top:377px;width:72px;height:14px;overflow:hidden;"><div class="t" style="left:2px;top:0;">5A1 00-01</div></div><div style="position:absolute;left:171px;top:392px;width:72px;height:14px;overflow:hidden;"><div class="t" style="left:2px;top:0;">5A1 00-01</div></div><div style="position:absolute;left:171px;top:407px;width:72px;height:14px;overflow:hidden;"><div class="t" style="left:2px;top:0;">5A1 00-01</div></div><div style="position:absolute;left:171px;top:422px;width:72px;height:14px;overflow:hidden;"><div class="t" style="left:2px;top:0;">5A1 00-01</div></div><div style="position:absolute;left:171px;top:437px;width:72px;height:14px;overflow:hidden;"><div class="t" style="left:2px;top:0;">5A1 00-01</div></div><div style="position:absolute;left:134px;top:704px;width:855px;height:16px;background:repeating-conic-gradient(#f0f0f0 0 25%,#fff 0 50%) 0 0/2px 2px;"></div><div style="position:absolute;left:134px;top:704px;width:16px;height:16px;box-sizing:border-box;background:#f0f0f0;border-top:1px solid #e3e3e3;border-left:1px solid #e3e3e3;border-right:1px solid #696969;border-bottom:1px solid #696969;"><div style="position:absolute;left:0px;top:0px;width:14px;height:14px;box-sizing:border-box;border-top:1px solid #fff;border-left:1px solid #fff;border-right:1px solid #a0a0a0;border-bottom:1px solid #a0a0a0;"></div><svg style="position:absolute;left:4px;top:3px" width="5" height="8"><path d="M4 0L0 4L4 8Z" fill="#000"/></svg></div><div style="position:absolute;left:150px;top:704px;width:18px;height:16px;box-sizing:border-box;background:#f0f0f0;border-top:1px solid #e3e3e3;border-left:1px solid #e3e3e3;border-right:1px solid #696969;border-bottom:1px solid #696969;"><div style="position:absolute;left:0px;top:0px;width:16px;height:14px;box-sizing:border-box;border-top:1px solid #fff;border-left:1px solid #fff;border-right:1px solid #a0a0a0;border-bottom:1px solid #a0a0a0;"></div></div><div style="position:absolute;left:973px;top:704px;width:16px;height:16px;box-sizing:border-box;background:#f0f0f0;border-top:1px solid #e3e3e3;border-left:1px solid #e3e3e3;border-right:1px solid #696969;border-bottom:1px solid #696969;"><div style="position:absolute;left:0px;top:0px;width:14px;height:14px;box-sizing:border-box;border-top:1px solid #fff;border-left:1px solid #fff;border-right:1px solid #a0a0a0;border-bottom:1px solid #a0a0a0;"></div><svg style="position:absolute;left:5px;top:3px" width="5" height="8"><path d="M0 0L4 4L0 8Z" fill="#000"/></svg></div><div style="position:absolute;left:133px;top:728px;width:745px;height:25px;box-sizing:border-box;background:#f0f0f0;border-top:1px solid #e3e3e3;border-left:1px solid #e3e3e3;border-right:1px solid #696969;border-bottom:1px solid #696969;"><div style="position:absolute;left:0px;top:0px;width:743px;height:23px;box-sizing:border-box;border-top:1px solid #fff;border-left:1px solid #fff;border-right:1px solid #a0a0a0;border-bottom:1px solid #a0a0a0;"></div><div class="t c" style="left:0;top:5px;width:743px;text-align:center;">Spustit PRŮVODCE přenosem jízd ze systému Tessie – For your Tesla do programu Autopark</div></div><div style="position:absolute;left:885px;top:728px;width:105px;height:25px;box-sizing:border-box;background:#f0f0f0;border-top:1px solid #e3e3e3;border-left:1px solid #e3e3e3;border-right:1px solid #696969;border-bottom:1px solid #696969;"><div style="position:absolute;left:0px;top:0px;width:103px;height:23px;box-sizing:border-box;border-top:1px solid #fff;border-left:1px solid #fff;border-right:1px solid #a0a0a0;border-bottom:1px solid #a0a0a0;"></div><div class="t c" style="left:0;top:5px;width:103px;text-align:center;">Zavřít</div></div><div style="position:absolute;left:213px;top:235px;width:696px;height:441px;box-sizing:border-box;background:#f0f0f0;border:1px solid #f6f6f6;border-radius:8px;box-shadow:0 0 0 1px rgba(0,0,0,0.22),0 18px 46px rgba(0,0,0,0.34),0 4px 10px rgba(0,0,0,0.10);overflow:hidden;"><div style="position:absolute;left:0px;top:0px;width:694px;height:25px;background:#f3f3f3;"></div></div><div class="s" style="left:217px;top:241px;font-size:11.4px;line-height:15px;color:#1a1a1a;">PRŮVODCE: Přenos jízd ze systému Tessie — For your Tesla - krok 2 ze 3</div><svg style="position:absolute;left:889px;top:242px" width="11" height="11"><path d="M0.5 0.5L10.5 10.5M10.5 0.5L0.5 10.5" stroke="#111" stroke-width="1.1"/></svg><svg style="position:absolute;left:221px;top:268px" width="150" height="400" viewBox="0 0 150 400" preserveAspectRatio="none">
<defs>
<linearGradient id="sky" x1="0" y1="0" x2="0" y2="1">
<stop offset="0" stop-color="#4e70a0"/><stop offset="0.1" stop-color="#7a9cc4"/><stop offset="0.25" stop-color="#9cc4de"/><stop offset="0.45" stop-color="#86aed0"/><stop offset="0.65" stop-color="#b0dcf0"/><stop offset="0.85" stop-color="#a0cce6"/><stop offset="1" stop-color="#6a8cb8"/></linearGradient>
<linearGradient id="water" x1="0" y1="0" x2="1" y2="0"><stop offset="0" stop-color="#1a2640"/><stop offset="0.5" stop-color="#3a5480"/><stop offset="1" stop-color="#5a78a8"/></linearGradient>
<linearGradient id="road" x1="0" y1="0" x2="0" y2="1"><stop offset="0" stop-color="#1e2840"/><stop offset="0.3" stop-color="#1c2a4a"/><stop offset="1" stop-color="#182648"/></linearGradient>
<filter id="b2" x="-30%" y="-80%" width="160%" height="260%"><feGaussianBlur stdDeviation="3"/></filter>
<filter id="b1" x="-20%" y="-50%" width="140%" height="200%"><feGaussianBlur stdDeviation="1.2"/></filter>
</defs>
<rect width="150" height="100" fill="url(#sky)"/>
<g filter="url(#b2)">
<ellipse cx="40" cy="4" rx="50" ry="5" fill="#4a6c9c"/>
<ellipse cx="120" cy="14" rx="40" ry="6" fill="#7898c0"/>
<ellipse cx="78" cy="37" rx="38" ry="9" fill="#4a6690"/>
<ellipse cx="22" cy="52" rx="28" ry="8" fill="#4e6c96"/>
<ellipse cx="18" cy="34" rx="22" ry="4" fill="#6a8ab0"/>
<ellipse cx="130" cy="55" rx="30" ry="8" fill="#c0e8f6"/>
<path d="M25 84L70 70L110 60L150 60V90H25Z" fill="#6884b0"/>
</g>
<path d="M0 75L10 76L26 82L49 77L69 78L87 73L122 75L150 85V399H0Z" fill="#1a2030"/>
<path d="M75 80L87 73L122 75L150 85V105L75 95Z" fill="#2a3450" opacity="0.6" filter="url(#b1)"/>
<rect y="118" width="150" height="281" fill="#10131a" filter="url(#b1)"/>
<path d="M0 90H150M0 98H150M0 106H150M0 114H150M12 80V125M28 82V125M44 78V125M60 78V125M76 78V125M92 76V125M108 76V125M124 78V125M140 82V125" stroke="#2e3850" stroke-width="0.6" opacity="0.6"/>
<path d="M87 143L150 140V205L123 203L113 177L95 155Z" fill="url(#water)"/>
<path d="M100 165L150 160V195L125 195Z" fill="#7a98c8" opacity="0.45" filter="url(#b1)"/>
<path d="M0 146L40 140L70 139L87 146L113 177L123 203L125 224L121 252L111 279L93.5 324L66 399H0V275L26 252L49 224L59 207L61 189L52 170L30 160L0 158Z" fill="url(#road)"/>
<path d="M0 166L20 168L34 175L31 186L17 203L0 214Z" fill="#1a2646" opacity="0.8"/>
<g stroke="#8aa8d8" fill="none" stroke-width="1">
<path d="M87 146L113 177L123 203L125 224L121 252L111 279L93.5 324L66 399"/>
<path d="M52 170L61 189L59 207L49 224L26 252L0 275" opacity="0.7"/>
<path d="M34 175L31 186L17 203L0 214" opacity="0.8"/>
</g>
<g stroke="#f4f8ff" fill="none">
<path d="M0 151.5H150M0 175.5H150M0 200.5H150M0 246.5H150M0 326H150" stroke-width="1.3"/>
<path d="M0 139H150M0 161.5H150" stroke-width="0.8" opacity="0.6"/>
<path d="M62.5 125L69 172L81.6 246.7L93.5 324L108 399" stroke-width="1.5"/>
<path d="M43 139L0 193M81.6 137L149 196" stroke-width="1" opacity="0.8"/>
</g>
<path d="M68.6 244L45 274M23.8 299L1.5 324M80 200L74 214" stroke="#9ab0e0" stroke-width="1.6"/>
<path d="M132 240L138 399" stroke="#3a1c12" stroke-width="10" opacity="0.3" filter="url(#b2)"/>
<rect x="90" y="177" width="23" height="14" rx="3" fill="#4a5068"/><rect x="93" y="179" width="17" height="5" fill="#7a8098"/><rect x="94" y="187" width="5" height="3" fill="#fff"/><rect x="106" y="187" width="5" height="3" fill="#fff"/>
</svg><div class="s" style="left:389px;top:270px;font-size:17px;line-height:18px;font-weight:bold;">Sestavené jízdy</div><div style="position:absolute;left:389px;top:290px;width:504px;height:2px;background:#000;"></div><div class="t" style="left:389px;top:297px;transform:scaleX(.862);">Ze záznamů o pohybu vozidla byly sestaveny tyto jízdy pro přenos do knihy jízd.</div><div style="position:absolute;left:389px;top:324px;width:505px;height:249px;box-sizing:border-box;background:#f0f0f0;border-left:1px solid #696969;border-top:1px solid #696969;border-right:1px solid #696969;border-bottom:1px solid #696969;overflow:hidden;"></div><div style="position:absolute;left:390px;top:325px;width:36px;height:26px;box-sizing:border-box;background:#f0f0f0;border-left:1px solid #fff;border-top:1px solid #fff;"></div><div style="position:absolute;left:426px;top:325px;width:64px;height:26px;box-sizing:border-box;background:#f0f0f0;border-left:1px solid #fff;border-top:1px solid #fff;"></div><div class="t" style="left:429px;top:331px;">Vozidlo</div><div style="position:absolute;left:490px;top:325px;width:64px;height:26px;box-sizing:border-box;background:#f0f0f0;border-left:1px solid #fff;border-top:1px solid #fff;"></div><div class="t" style="left:493px;top:331px;">Řidič</div><div style="position:absolute;left:554px;top:325px;width:60px;height:26px;box-sizing:border-box;background:#f0f0f0;border-left:1px solid #fff;border-top:1px solid #fff;"></div><div class="t" style="left:557px;top:331px;">Zahájení</div><div style="position:absolute;left:614px;top:325px;width:60px;height:26px;box-sizing:border-box;background:#f0f0f0;border-left:1px solid #fff;border-top:1px solid #fff;"></div><div class="t" style="left:617px;top:331px;">Ukončení</div><div style="position:absolute;left:674px;top:325px;width:219px;height:26px;box-sizing:border-box;background:#f0f0f0;border-left:1px solid #fff;border-top:1px solid #fff;"></div><div class="t" style="left:677px;top:331px;">Trasa</div><div style="position:absolute;left:426px;top:325px;width:1px;height:26px;background:#000;"></div><div style="position:absolute;left:490px;top:325px;width:1px;height:26px;background:#000;"></div><div style="position:absolute;left:554px;top:325px;width:1px;height:26px;background:#000;"></div><div style="position:absolute;left:614px;top:325px;width:1px;height:26px;background:#000;"></div><div style="position:absolute;left:674px;top:325px;width:1px;height:26px;background:#000;"></div><div style="position:absolute;left:390px;top:351px;width:503px;height:1px;background:#000;"></div><div style="position:absolute;left:390px;top:352px;width:36px;height:44px;box-sizing:border-box;background:#f0f0f0;border-left:1px solid #fff;border-top:1px solid #fff;"></div><div style="position:absolute;left:427px;top:352px;width:466px;height:44px;background:#fff;"></div><div style="position:absolute;left:390px;top:396px;width:503px;height:1px;background:#a0a0a0;"></div><div style="position:absolute;left:490px;top:352px;width:1px;height:45px;background:#a0a0a0;"></div><div style="position:absolute;left:554px;top:352px;width:1px;height:45px;background:#a0a0a0;"></div><div style="position:absolute;left:614px;top:352px;width:1px;height:45px;background:#a0a0a0;"></div><div style="position:absolute;left:674px;top:352px;width:1px;height:45px;background:#a0a0a0;"></div><div style="position:absolute;left:426px;top:352px;width:1px;height:45px;background:#000;"></div><div style="position:absolute;left:427px;top:352px;width:63px;height:44px;overflow:hidden;"><div class="t" style="left:2px;top:0px;line-height:13px;">5A1 00-01</div></div><div style="position:absolute;left:555px;top:352px;width:59px;height:44px;overflow:hidden;"><div class="t" style="left:2px;top:0px;line-height:13px;letter-spacing:0.35px;">17.10.2025
12:00</div></div><div style="position:absolute;left:615px;top:352px;width:59px;height:44px;overflow:hidden;"><div class="t" style="left:2px;top:0px;line-height:13px;letter-spacing:0.35px;">17.10.2025
12:37</div></div><div style="position:absolute;left:675px;top:352px;width:218px;height:44px;overflow:hidden;"><div class="t" style="left:2px;top:0px;line-height:13px;letter-spacing:0.15px;">U Lidového Domu 857/6, 190 00 Praha, Prague,
Czech Republic</div></div><div style="position:absolute;left:390px;top:397px;width:36px;height:44px;box-sizing:border-box;background:#f0f0f0;border-left:1px solid #fff;border-top:1px solid #fff;"></div><div style="position:absolute;left:427px;top:397px;width:466px;height:44px;background:#fff;"></div><div style="position:absolute;left:390px;top:441px;width:503px;height:1px;background:#a0a0a0;"></div><div style="position:absolute;left:490px;top:397px;width:1px;height:45px;background:#a0a0a0;"></div><div style="position:absolute;left:554px;top:397px;width:1px;height:45px;background:#a0a0a0;"></div><div style="position:absolute;left:614px;top:397px;width:1px;height:45px;background:#a0a0a0;"></div><div style="position:absolute;left:674px;top:397px;width:1px;height:45px;background:#a0a0a0;"></div><div style="position:absolute;left:426px;top:397px;width:1px;height:45px;background:#000;"></div><div style="position:absolute;left:427px;top:397px;width:63px;height:44px;overflow:hidden;"><div class="t" style="left:2px;top:0px;line-height:13px;">5A1 00-01</div></div><div style="position:absolute;left:555px;top:397px;width:59px;height:44px;overflow:hidden;"><div class="t" style="left:2px;top:0px;line-height:13px;letter-spacing:0.35px;">18.10.2025
09:42</div></div><div style="position:absolute;left:615px;top:397px;width:59px;height:44px;overflow:hidden;"><div class="t" style="left:2px;top:0px;line-height:13px;letter-spacing:0.35px;">18.10.2025
18:55</div></div><div style="position:absolute;left:675px;top:397px;width:218px;height:44px;overflow:hidden;"><div class="t" style="left:2px;top:0px;line-height:13px;letter-spacing:0.15px;">U Lidového Domu 857/6, 190 00 Praha, Prague,
Czech Republic &gt; Ústecká 822/1, 184 00 Praha,
Prague, Czech Republic &gt; Korycanská 372/2,
Praha, Prague, Czech Republic &gt; Křemická</div></div><div style="position:absolute;left:390px;top:442px;width:36px;height:44px;box-sizing:border-box;background:#f0f0f0;border-left:1px solid #fff;border-top:1px solid #fff;"></div><div style="position:absolute;left:427px;top:442px;width:466px;height:44px;background:#fff;"></div><div style="position:absolute;left:390px;top:486px;width:503px;height:1px;background:#a0a0a0;"></div><div style="position:absolute;left:490px;top:442px;width:1px;height:45px;background:#a0a0a0;"></div><div style="position:absolute;left:554px;top:442px;width:1px;height:45px;background:#a0a0a0;"></div><div style="position:absolute;left:614px;top:442px;width:1px;height:45px;background:#a0a0a0;"></div><div style="position:absolute;left:674px;top:442px;width:1px;height:45px;background:#a0a0a0;"></div><div style="position:absolute;left:426px;top:442px;width:1px;height:45px;background:#000;"></div><div style="position:absolute;left:427px;top:442px;width:63px;height:44px;overflow:hidden;"><div class="t" style="left:2px;top:0px;line-height:13px;">5A1 00-01</div></div><div style="position:absolute;left:555px;top:442px;width:59px;height:44px;overflow:hidden;"><div class="t" style="left:2px;top:0px;line-height:13px;letter-spacing:0.35px;">19.10.2025
07:20</div></div><div style="position:absolute;left:615px;top:442px;width:59px;height:44px;overflow:hidden;"><div class="t" style="left:2px;top:0px;line-height:13px;letter-spacing:0.35px;">19.10.2025
07:51</div></div><div style="position:absolute;left:675px;top:442px;width:218px;height:44px;overflow:hidden;"><div class="t" style="left:2px;top:0px;line-height:13px;letter-spacing:0.15px;">Mlazická, 181 00 Praha, Prague, Czech Republic &gt;
Sídl. Hůrka 824, 278 01 Kralupy nad Vltavou,
Bohemian, Czech Republic</div></div><div style="position:absolute;left:390px;top:486px;width:36px;height:1px;background:#000;"></div><div style="position:absolute;left:426px;top:351px;width:64px;height:46px;box-sizing:border-box;border:2px solid #000;"></div><svg style="position:absolute;left:405px;top:368px" width="6" height="11"><path d="M0 0L6 5.5L0 11Z" fill="#000"/></svg><div style="position:absolute;left:390px;top:556px;width:503px;height:16px;background:repeating-conic-gradient(#f0f0f0 0 25%,#fff 0 50%) 0 0/2px 2px;"></div><div style="position:absolute;left:390px;top:556px;width:16px;height:16px;box-sizing:border-box;background:#f0f0f0;border-top:1px solid #e3e3e3;border-left:1px solid #e3e3e3;border-right:1px solid #696969;border-bottom:1px solid #696969;"><div style="position:absolute;left:0px;top:0px;width:14px;height:14px;box-sizing:border-box;border-top:1px solid #fff;border-left:1px solid #fff;border-right:1px solid #a0a0a0;border-bottom:1px solid #a0a0a0;"></div><svg style="position:absolute;left:4px;top:3px" width="5" height="8"><path d="M4 0L0 4L4 8Z" fill="#000"/></svg></div><div style="position:absolute;left:406px;top:556px;width:18px;height:16px;box-sizing:border-box;background:#f0f0f0;border-top:1px solid #e3e3e3;border-left:1px solid #e3e3e3;border-right:1px solid #696969;border-bottom:1px solid #696969;"><div style="position:absolute;left:0px;top:0px;width:16px;height:14px;box-sizing:border-box;border-top:1px solid #fff;border-left:1px solid #fff;border-right:1px solid #a0a0a0;border-bottom:1px solid #a0a0a0;"></div></div><div style="position:absolute;left:877px;top:556px;width:16px;height:16px;box-sizing:border-box;background:#f0f0f0;border-top:1px solid #e3e3e3;border-left:1px solid #e3e3e3;border-right:1px solid #696969;border-bottom:1px solid #696969;"><div style="position:absolute;left:0px;top:0px;width:14px;height:14px;box-sizing:border-box;border-top:1px solid #fff;border-left:1px solid #fff;border-right:1px solid #a0a0a0;border-bottom:1px solid #a0a0a0;"></div><svg style="position:absolute;left:5px;top:3px" width="5" height="8"><path d="M0 0L4 4L0 8Z" fill="#000"/></svg></div><div class="t" style="left:389px;top:583px;transform:scaleX(.885);">Tohoto řidiče doplnit do jízd, kde není řidič uveden</div><div class="t" style="left:389px;top:607px;transform:scaleX(.885);">Tento účel doplnit do jízd, kde není účel uveden</div><div style="position:absolute;left:653px;top:580px;width:240px;height:20px;box-sizing:border-box;background:#fff;border-top:1px solid #a0a0a0;border-left:1px solid #a0a0a0;border-right:1px solid #fff;border-bottom:1px solid #fff;"><div style="position:absolute;left:0px;top:0px;width:238px;height:18px;box-sizing:border-box;border-top:1px solid #696969;border-left:1px solid #696969;border-right:1px solid #e3e3e3;border-bottom:1px solid #e3e3e3;"></div></div><div style="position:absolute;left:875px;top:582px;width:17px;height:17px;box-sizing:border-box;background:#f0f0f0;border-top:1px solid #e3e3e3;border-left:1px solid #e3e3e3;border-right:1px solid #696969;border-bottom:1px solid #696969;"><div style="position:absolute;left:0px;top:0px;width:15px;height:15px;box-sizing:border-box;border-top:1px solid #fff;border-left:1px solid #fff;border-right:1px solid #a0a0a0;border-bottom:1px solid #a0a0a0;"></div><svg style="position:absolute;left:4px;top:6px" width="8" height="5"><path d="M0.5 0.5H7.5L4 4.5Z" fill="#000"/></svg></div><div class="t" style="left:658px;top:583px;line-height:14px;">Novák Josef</div><div style="position:absolute;left:653px;top:604px;width:240px;height:20px;box-sizing:border-box;background:#fff;border-top:1px solid #a0a0a0;border-left:1px solid #a0a0a0;border-right:1px solid #fff;border-bottom:1px solid #fff;"><div style="position:absolute;left:0px;top:0px;width:238px;height:18px;box-sizing:border-box;border-top:1px solid #696969;border-left:1px solid #696969;border-right:1px solid #e3e3e3;border-bottom:1px solid #e3e3e3;"></div></div><div style="position:absolute;left:875px;top:606px;width:17px;height:17px;box-sizing:border-box;background:#f0f0f0;border-top:1px solid #e3e3e3;border-left:1px solid #e3e3e3;border-right:1px solid #696969;border-bottom:1px solid #696969;"><div style="position:absolute;left:0px;top:0px;width:15px;height:15px;box-sizing:border-box;border-top:1px solid #fff;border-left:1px solid #fff;border-right:1px solid #a0a0a0;border-bottom:1px solid #a0a0a0;"></div><svg style="position:absolute;left:4px;top:6px" width="8" height="5"><path d="M0.5 0.5H7.5L4 4.5Z" fill="#000"/></svg></div><div class="t" style="left:658px;top:607px;line-height:14px;">Zákazníci</div><div style="position:absolute;left:389px;top:636px;width:503px;height:1px;background:#a0a0a0;"></div><div style="position:absolute;left:389px;top:637px;width:503px;height:1px;background:#fff;"></div><div style="position:absolute;left:629px;top:644px;width:81px;height:25px;box-sizing:border-box;background:#f0f0f0;border-top:1px solid #e3e3e3;border-left:1px solid #e3e3e3;border-right:1px solid #696969;border-bottom:1px solid #696969;"><div style="position:absolute;left:0px;top:0px;width:79px;height:23px;box-sizing:border-box;border-top:1px solid #fff;border-left:1px solid #fff;border-right:1px solid #a0a0a0;border-bottom:1px solid #a0a0a0;"></div><div class="t c" style="left:0;top:5px;width:79px;text-align:center;">&lt; Z<u>p</u>ět</div></div><div style="position:absolute;left:717px;top:644px;width:81px;height:25px;box-sizing:border-box;border:1px solid #696969;"><div style="position:absolute;left:0px;top:0px;width:79px;height:23px;box-sizing:border-box;background:#f0f0f0;border-top:1px solid #e3e3e3;border-left:1px solid #e3e3e3;border-right:1px solid #696969;border-bottom:1px solid #696969;"><div style="position:absolute;left:0px;top:0px;width:77px;height:21px;box-sizing:border-box;border-top:1px solid #fff;border-left:1px solid #fff;border-right:1px solid #a0a0a0;border-bottom:1px solid #a0a0a0;"></div><div style="position:absolute;left:2px;top:2px;width:71px;height:15px;border:1px dotted #000;"></div><div class="t c" style="left:0;top:4px;width:77px;text-align:center;"><u>D</u>alší &gt;</div></div></div><div style="position:absolute;left:813px;top:644px;width:81px;height:25px;box-sizing:border-box;background:#f0f0f0;border-top:1px solid #e3e3e3;border-left:1px solid #e3e3e3;border-right:1px solid #696969;border-bottom:1px solid #696969;"><div style="position:absolute;left:0px;top:0px;width:79px;height:23px;box-sizing:border-box;border-top:1px solid #fff;border-left:1px solid #fff;border-right:1px solid #a0a0a0;border-bottom:1px solid #a0a0a0;"></div><div class="t c" style="left:0;top:5px;width:79px;text-align:center;">Storno</div></div></body></html>
